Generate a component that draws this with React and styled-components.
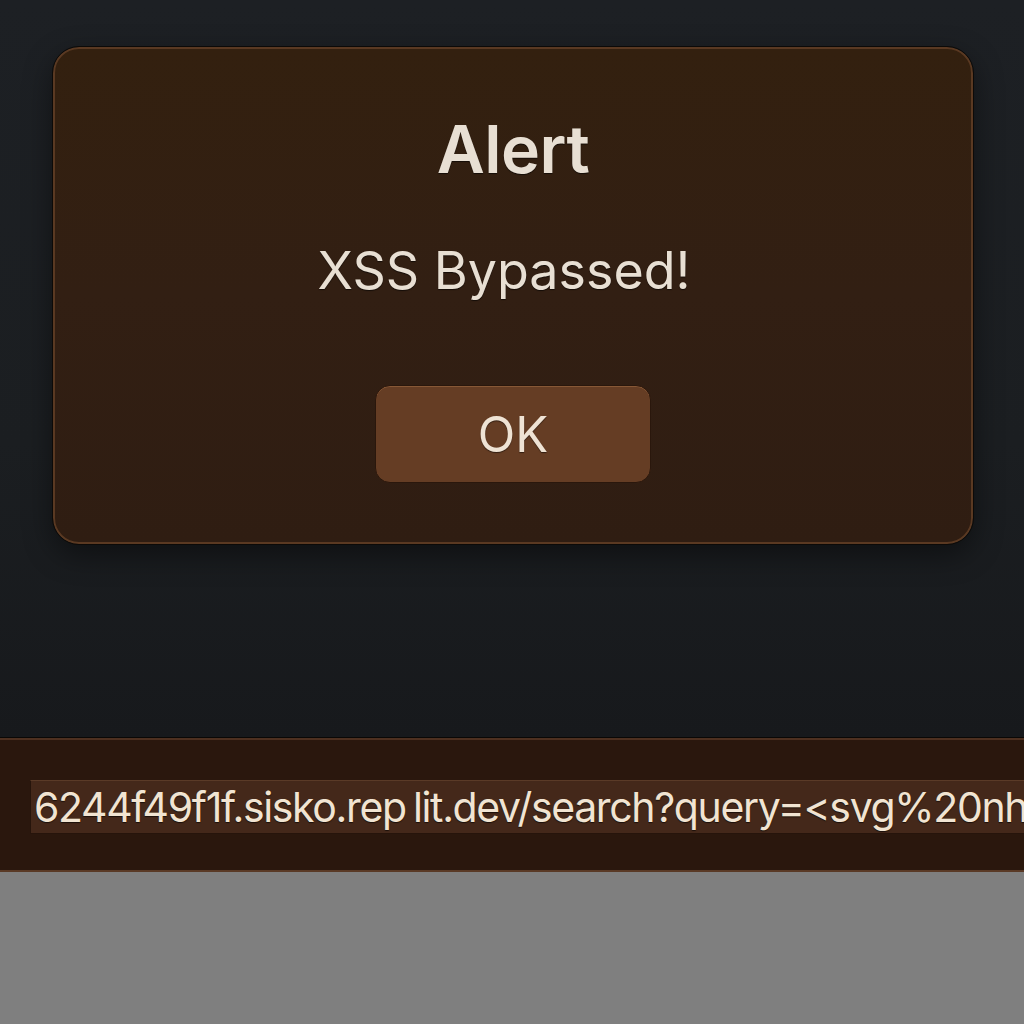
import React from "react";
import styled, { createGlobalStyle } from "styled-components";

const Global = createGlobalStyle`
  html, body { margin: 0; padding: 0; background: #7f7f7f; }
  body { font-family: Inter, "Noto Sans", sans-serif; }
`;

const Page = styled.div`
  width: 1024px;
  height: 1024px;
  display: flex;
  flex-direction: column;
  overflow: hidden;
`;

const Backdrop = styled.div`
  height: 738px;
  flex: none;
  background: linear-gradient(180deg, #1d2024 0%, #1b1e21 60%, #17191c 100%);
  padding: 47px 51px 0 53px;
  box-sizing: border-box;
`;

const Dialog = styled.div`
  height: 497px;
  box-sizing: border-box;
  border-radius: 26px;
  border: 2px solid #5a3922;
  outline: 1.5px solid #0c0a08;
  background: linear-gradient(180deg, #33200f 0%, #321f13 50%, #2f1d12 100%);
  box-shadow: 0 10px 30px rgba(0, 0, 0, 0.45);
  display: flex;
  flex-direction: column;
  align-items: center;
  padding-top: 67px;
  color: #e8dfd3;
`;

const Title = styled.h1`
  margin: 0;
  font-size: 66px;
  line-height: 66px;
  font-weight: 600;
  letter-spacing: -0.5px;
  text-shadow: 0 1px 1px rgba(0, 0, 0, 0.6);
`;

const Message = styled.p`
  margin: 63px 18px 0 0;
  font-size: 52px;
  line-height: 52px;
  font-weight: 400;
  letter-spacing: 0px;
  text-shadow: 0 1px 1px rgba(0, 0, 0, 0.6);
`;

const Button = styled.button`
  margin-top: 88px;
  width: 276px;
  height: 98px;
  border-radius: 15px;
  border: 1.5px solid #2a170c;
  box-shadow: inset 0 1px 0 rgba(200, 140, 90, 0.35);
  background: #653d24;
  color: #efe3d4;
  font-family: Inter, "Noto Sans", sans-serif;
  font-size: 49px;
  font-weight: 400;
  display: flex;
  align-items: center;
  justify-content: center;
  padding: 0;
  text-shadow: 0 1px 1px rgba(0, 0, 0, 0.5);
`;

const UrlBar = styled.div`
  height: 134px;
  flex: none;
  box-sizing: border-box;
  background: #2a170d;
  border-top: 2px solid #4e3020;
  border-bottom: 2px solid #5a3a26;
  box-shadow: 0 -1px 0 #0a0806;
  padding: 40px 0 0 30px;
  overflow: hidden;
`;

const UrlField = styled.div`
  height: 54px;
  box-sizing: border-box;
  background: #44281a;
  border-top: 1px solid #5a3a27;
  border-bottom: 1px solid #26140b;
  border-left: 1px solid #26140b;
  padding-left: 3px;
  display: flex;
  align-items: center;
  white-space: nowrap;
  overflow: hidden;
  color: #f1e4d2;
  font-size: 41px;
  letter-spacing: -1.35px;
  word-spacing: -3px;
  text-shadow: 0 1px 1px rgba(0, 0, 0, 0.6);
`;

const Filler = styled.div`
  flex: 1;
  background: #7f7f7f;
`;

export default function App() {
  return (
    <Page>
      <Global />
      <Backdrop>
        <Dialog>
          <Title>Alert</Title>
          <Message>XSS Bypassed!</Message>
          <Button>OK</Button>
        </Dialog>
      </Backdrop>
      <UrlBar>
        <UrlField>6244f49f1f.sisko.rep lit.dev/search?query=&lt;svg%20nh</UrlField>
      </UrlBar>
      <Filler />
    </Page>
  );
}
